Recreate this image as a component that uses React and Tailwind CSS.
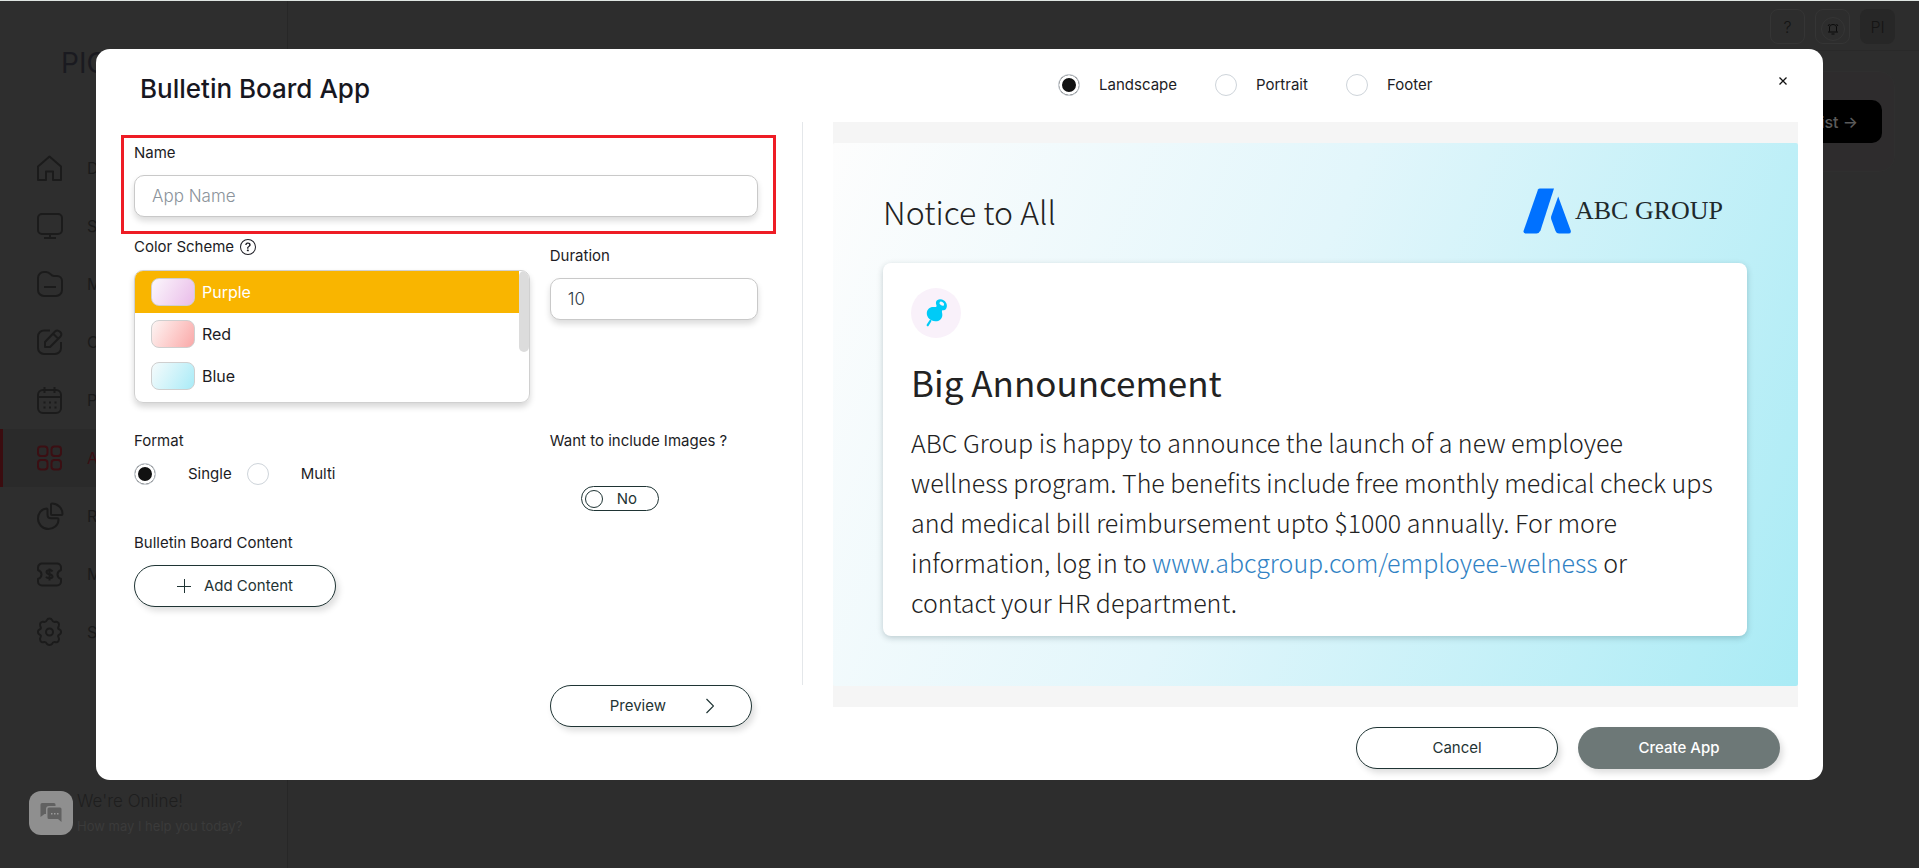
import { useState } from "react";
import { BsQuestionCircle } from "react-icons/bs";

const NAV = [
  { label: "Dashboard", icon: "home" },
  { label: "Screens", icon: "screen" },
  { label: "Media", icon: "folder" },
  { label: "Compose", icon: "edit" },
  { label: "Planner", icon: "calendar" },
  { label: "Apps", icon: "apps", active: true },
  { label: "Reports", icon: "pie" },
  { label: "Monetize", icon: "ticket" },
  { label: "Settings", icon: "gear" },
];

const SCHEMES = [
  { label: "Purple", swatch: "bg-linear-120 from-[#fbf7fc] to-[#e9bce9]" },
  { label: "Red", swatch: "bg-linear-120 from-[#fcf5f4] to-[#f9a8a8]" },
  { label: "Blue", swatch: "bg-linear-120 from-[#f5fbfc] to-[#a8ebf7]" },
];

const ICONS = {
  home: <path d="M1 11.500 12.500 1.500l11.500 10V25h-8v-8.500H9V25H1Z" />,
  screen: (
    <>
      <rect x="1" y="1" width="24" height="20" rx="4" />
      <path d="M13 21v4M7 25h12" />
    </>
  ),
  folder: (
    <>
      <path d="M1 7a6 6 0 0 1 6-6h2c5 0 4 4 8 4h3a5 5 0 0 1 5 5v9a6 6 0 0 1-6 6H7a6 6 0 0 1-6-6Z" />
      <path d="M7 16h12" />
    </>
  ),
  edit: (
    <>
      <path d="M13 1.500H7a6 6 0 0 0-6 6V19a6 6 0 0 0 6 6h11a6 6 0 0 0 6-6v-6" />
      <path d="M8 18v-5L18 2.500c3-3 8.500 2 5.500 5L13 18Z M16 4.500l5.500 5.500" />
    </>
  ),
  calendar: (
    <>
      <rect x="1" y="3" width="23" height="23" rx="5" />
      <path d="M1 10h23M7.500 0v6M17.500 0v6" />
      <path d="M6.500 15.500h2M12 15.500h2M17.500 15.500h2M6.500 20.500h2M12 20.500h2M17.500 20.500h2" />
    </>
  ),
  apps: (
    <>
      <rect x="1" y="1.500" width="9.500" height="9.500" rx="3" />
      <rect x="14.500" y="1.500" width="9.500" height="9.500" rx="3" />
      <rect x="1" y="15" width="9.500" height="9.500" rx="3" />
      <rect x="14.500" y="15" width="9.500" height="9.500" rx="3" />
    </>
  ),
  pie: (
    <>
      <path d="M9.500 5.500C4 6 1 10.500 1 15.500A10.500 10.500 0 0 0 11.500 26c5.500 0 10-4 10-9.500 0-.8-.5-1.200-1.200-1.200H14c-2.500 0-3.500-1-3.500-3.500V6.500c0-.7-.4-1-1-1Z" />
      <path d="M14 1.500c0-.6.4-1 1-1C20.500.5 25.500 5 25.500 11c0 .6-.4 1-1 1H15c-.6 0-1-.4-1-1Z" />
    </>
  ),
  ticket: (
    <>
      <path d="M5 2.500h15a4 4 0 0 1 4 4V9c-2.500 1-3.500 2.500-3.500 4.500S21.500 17 24 18v2.500a4 4 0 0 1-4 4H5a4 4 0 0 1-4-4V18c2.500-1 3.500-2.500 3.500-4.500S3.500 10 1 9V6.500a4 4 0 0 1 4-4Z" />
      <path d="M15.500 10.500c-1-2-6-1.800-6 .5 0 3 6 1.500 6 4.500 0 2.300-5 2.500-6.500.3M12.500 7.500v12" />
    </>
  ),
  gear: (
    <g transform="translate(0 -1.500)">
      <path d="M10 2.500c.8-2 4.200-2 5 0 .8 2 1.900 2.400 3.700 1.800 2-.6 4.300 2.200 3 4.400-1 1.900-.8 2.700 1 3.500 1.800.9 1.800 3.700 0 4.600-1.800.8-2 1.600-1 3.500 1.300 2.200-1 5-3 4.400-1.800-.6-2.900-.2-3.700 1.800-.8 1.200-4.200 1.200-5 0-.8-2-1.900-2.400-3.700-1.800-2 .6-4.300-2.200-3-4.400 1-1.900.8-2.700-1-3.500-1.800-.9-1.800-3.700 0-4.600 1.800-.8 2-1.600 1-3.500-1.300-2.200 1-5 3-4.400 1.800.6 2.900.2 3.700-1.800Z" />
      <circle cx="12.500" cy="14.500" r="3.500" />
    </g>
  ),
};

function NavIcon({ name }) {
  return (
    <svg className="h-[27px] w-[26px] shrink-0" viewBox="0 0 26 27" fill="none" stroke="currentColor" strokeWidth="2" strokeLinejoin="round" overflow="visible" aria-hidden="true">
      {ICONS[name]}
    </svg>
  );
}

function Radio({ name, label, checked, onChange, gap }) {
  return (
    <label className={"flex items-center text-[15px] leading-5 text-[#1c1c24] " + gap}>
      <input
        type="radio"
        name={name}
        checked={checked}
        onChange={onChange}
        className="size-[22px] appearance-none rounded-full border border-[#ced4da] bg-white checked:bg-[#111] checked:shadow-[inset_0_0_0_3px_#fff]"
      />
      {label}
    </label>
  );
}

const PILL =
  "flex h-[42px] w-[202px] items-center rounded-full border border-[#1f3434] text-[15px] leading-5 text-[#1f3434] bg-white shadow-[3px_4px_6px_rgba(0,0,0,0.13)]";
const FIELD =
  "h-[42px] w-full rounded-[10px] border border-[#c9c9c9] bg-white px-[17px] text-[17px] font-light shadow-[0_4px_6px_rgba(0,0,0,0.14)] outline-none";
const LABEL = "text-[15px] leading-5 text-[#1c1c24]";

function Backdrop() {
  return (
    <div className="flex min-h-screen border-t border-[#dfe5e2] bg-[#2d2d2d]">
      <aside className="flex w-72 flex-col border-r border-[#272727] bg-[#2e2e2e]">
        <div className="h-[138px] pt-[42px] pl-[61px] text-[28px] leading-10 text-[#1a1a20]">PICKCEL</div>
        <nav>
          {NAV.map((n) => (
            <a
              key={n.label}
              href="#"
              className={
                "flex h-[58px] items-center gap-6 border-l-3 pl-[34px] text-base " +
                (n.active ? "border-[#3b0c0f] bg-[#2a2a2a] text-[#3b0f13]" : "border-transparent text-[#1b1b1b]")
              }
            >
              <NavIcon name={n.icon} />
              {n.label}
            </a>
          ))}
        </nav>
        <div className="mt-auto flex items-center gap-1 pb-[30px] pl-[29px]">
          <span className="flex size-11 items-center justify-center rounded-xl bg-[#8f8f8f]">
            <svg className="size-[22px]" viewBox="0 0 22 22" fill="#616161" aria-hidden="true">
              <path d="M2 1h12a1.500 1.500 0 0 1 1.500 1.500V4H9a3 3 0 0 0-3 3v5H4.500L.5 15V2.500A1.500 1.500 0 0 1 2 1Z" />
              <path d="M9 5.500h11A1.500 1.500 0 0 1 21.500 7v13l-3.500-3H9a1.500 1.500 0 0 1-1.500-1.500V7A1.500 1.500 0 0 1 9 5.500Z" />
              <path d="M11 11h1.500v1.500H11ZM14 11h1.500v1.500H14ZM17 11h1.500v1.500H17Z" fill="#9a9a9a" />
            </svg>
          </span>
          <div>
            <p className="text-[17px] leading-[26px] font-light text-[#1e1e1e]">We're Online!</p>
            <p className="text-[13px] leading-6 text-[#3b3b3b]">How may I help you today?</p>
          </div>
        </div>
      </aside>
      <div className="flex-1">
        <header className="flex h-[50px] justify-end gap-[10px] border-b border-[#292929] pt-2 pr-6">
          <button className="size-[35px] rounded-lg border border-[#353535] text-base font-light text-[#141414]">?</button>
          <button aria-label="Notifications" className="flex size-[35px] items-center justify-center rounded-lg border border-[#353535] pt-1">
            <span className="flex size-6 items-center justify-center rounded-full border border-[#353535]">
              <svg className="size-3" viewBox="0 0 12 12" fill="none" stroke="#0b0b0b" aria-hidden="true">
                <path d="M2.500 8.500V4a3.500 2.500 0 0 1 7 0v4.500M1 9h10M4.500 11h3M1 3l1.500-2M11 3 9.500 1" />
              </svg>
            </span>
          </button>
          <span className="flex size-[35px] items-center justify-center rounded-lg bg-[#272727] text-base font-light text-[#151515]">PI</span>
        </header>
        <section className="mt-5 mr-6 ml-6 flex h-[101px] items-start justify-end rounded-2xl border border-[#2f2f2f] bg-[#2e2c2d] pt-7 pr-3">
          <button className="h-[43px] rounded-[10px] bg-black px-6 text-base font-medium text-[#5a5a5a]">Create Playlist →</button>
        </section>
      </div>
    </div>
  );
}

function BulletinPreview() {
  return (
    <div className="bg-[#f5f5f5] py-[21px]">
      <div className="flex aspect-video flex-col rounded-xs bg-linear-113 from-[#fdfdfd] via-[#e2f6fb] via-45% to-[#a9ebf5] pr-[51px] pb-[50px] pl-[50px] font-['Noto_Sans_CJK_SC',sans-serif] text-[#222]">
        <div className="flex h-[120px] items-center justify-between pt-4 pr-6">
          <h2 className="text-[32px] leading-10 font-light">Notice to All</h2>
          <div className="flex items-center gap-1">
            <svg className="h-[46px] w-12" viewBox="0 0 48 46" fill="#0071ff" aria-hidden="true">
              <path d="M15 1.500Q15.500.5 17 .5H31L17.500 42.500Q16 45.500 13.500 45.500H3Q-.2 45.500.7 42.500Z" />
              <path d="M35.200 8.500 47.700 42.500Q48.500 45.500 45.500 45.500H36Q33.500 45.500 32.500 43L28.500 32Q27.700 30 28.300 28Z" />
            </svg>
            <span className="font-['Liberation_Serif',serif] text-[26px] leading-[30px] text-[#1f2a2c]">ABC GROUP</span>
          </div>
        </div>
        <article className="flex-1 rounded-lg bg-white pt-[25px] pr-8 pl-7 shadow-[0_2px_6px_rgba(0,40,50,0.22)]">
          <div className="flex size-[50px] items-center justify-center rounded-full bg-[#f9f1fa]">
            <svg className="h-[30px] w-6" viewBox="0 0 24 30" aria-hidden="true">
              <path d="M3.700 27.200 6.300 23" stroke="#00cbf7" strokeWidth="2.200" strokeLinecap="round" />
              <path
                d="M12 4C13 .8 17 .6 20 2.500c3 2 4 6.500 1.500 9-1 .8-2.300.8-3.300.8-.8 1.500.4 3 .1 5.500-.5 3.500-3.300 5.700-7 5.500C6.500 23 2.800 19.500 2.800 15.500c0-4 3-6.700 6.700-6.500 1.200 0 2.300.3 3-.5C13 7.500 11.500 6 12 4Z"
                fill="#00cbf7"
              />
              <ellipse cx="17.800" cy="5.700" rx="2.600" ry="1.700" transform="rotate(35 17.800 5.700)" fill="#f3f4fc" />
            </svg>
          </div>
          <h3 className="mt-[22px] text-[35px] leading-[44px] font-normal">Big Announcement</h3>
          <p className="mt-[18px] text-[25px] leading-10 font-light">
            ABC Group is happy to announce the launch of a new employee wellness program. The benefits include free monthly
            medical check ups and medical bill reimbursement upto $1000 annually. For more information, log in to{" "}
            <a href="#" className="text-[#3182c4]">
              www.abcgroup.com/employee-welness
            </a>{" "}
            or contact your HR department.
          </p>
        </article>
      </div>
    </div>
  );
}

export default function App() {
  const [layout, setLayout] = useState("Landscape");
  const [format, setFormat] = useState("Single");
  const [scheme, setScheme] = useState("Purple");
  const [images, setImages] = useState(false);

  return (
    <div className="relative font-[Inter,sans-serif]">
      <Backdrop />
      <div className="absolute inset-x-0 top-0 flex justify-center pt-[49px]">
        <div role="dialog" aria-labelledby="dialog-title" className="w-[90%] rounded-[14px] bg-white pb-[11px]">
          <div className="flex h-[73px] items-start">
            <h1 id="dialog-title" className="w-[41%] pt-[22px] pl-11 text-[26px] leading-9 font-medium text-[#17171f]">
              Bulletin Board App
            </h1>
            <div className="flex flex-1 gap-[38px] pt-[25px] pl-[254px]">
              {["Landscape", "Portrait", "Footer"].map((l) => (
                <Radio key={l} name="layout" label={l} gap="gap-[19px]" checked={layout === l} onChange={() => setLayout(l)} />
              ))}
            </div>
            <button aria-label="Close" className="mt-6 mr-8 flex size-4 items-center justify-center text-[#111]">
              <svg className="size-2" viewBox="0 0 8 8" fill="none" stroke="currentColor" strokeWidth="1.300" aria-hidden="true">
                <path d="M.5.5l7 7M7.500.5l-7 7" />
              </svg>
            </button>
          </div>

          <div className="flex items-start">
            <form className="w-[41%] pt-[13px] pr-7 pl-[25px]" onSubmit={(e) => e.preventDefault()}>
              <div className="border-3 border-[#ee1c25] pt-[5px] pr-[15px] pb-[14px] pl-[10px]">
                <label htmlFor="app-name" className={"mb-3 block " + LABEL}>
                  Name
                </label>
                <input id="app-name" type="text" placeholder="App Name" className={FIELD + " block text-[#4a5560] placeholder:text-[#8b939b]"} />
              </div>

              <div className="pr-[18px] pl-[13px]">
                <div className="grid grid-cols-[19fr_10fr] gap-x-5">
                  <div className="pt-[3px]">
                    <div id="scheme-label" className={"mb-[13px] flex items-center gap-[6px] " + LABEL}>
                      Color Scheme
                      <BsQuestionCircle className="size-4" />
                    </div>
                    <div className="relative h-[133px] overflow-hidden rounded-[9px] border border-[#d0d0d0] shadow-[0_4px_6px_rgba(0,0,0,0.16)]">
                      <ul role="listbox" aria-labelledby="scheme-label" className="mr-[10px]">
                        {SCHEMES.map((s) => (
                          <li
                            key={s.label}
                            role="option"
                            aria-selected={scheme === s.label}
                            onClick={() => setScheme(s.label)}
                            className={
                              "flex h-[42px] items-center gap-[7px] pl-4 text-base " +
                              (scheme === s.label ? "bg-[#f9b500] text-white" : "text-[#1c1c24]")
                            }
                          >
                            <span className={"h-7 w-11 rounded-lg border border-[#cfcfcf] " + s.swatch} />
                            {s.label}
                          </li>
                        ))}
                      </ul>
                      <span className="absolute top-0 right-0 h-[81px] w-[10px] rounded-full bg-[#dcdcdc]" />
                    </div>
                  </div>
                  <div className="pt-3">
                    <label htmlFor="duration" className={"mb-3 block " + LABEL}>
                      Duration
                    </label>
                    <input id="duration" type="text" defaultValue="10" className={FIELD + " text-[#2f3a45]"} />
                  </div>
                </div>

                <div className="mt-7 grid grid-cols-[19fr_10fr] gap-x-5">
                  <fieldset>
                    <legend className={"mb-3 " + LABEL}>Format</legend>
                    <div className="flex gap-[15px]">
                      {["Single", "Multi"].map((f) => (
                        <Radio key={f} name="format" label={f} gap="gap-8" checked={format === f} onChange={() => setFormat(f)} />
                      ))}
                    </div>
                  </fieldset>
                  <div>
                    <div id="images-label" className={"whitespace-nowrap " + LABEL}>
                      Want to include Images ?
                    </div>
                    <button
                      type="button"
                      role="switch"
                      aria-checked={images}
                      aria-labelledby="images-label"
                      onClick={() => setImages(!images)}
                      className="mt-[35px] ml-[31px] flex h-[25px] w-[78px] items-center gap-[14px] rounded-full border border-[#1f3434] pl-[3px] text-[15px] leading-5 text-[#1f3434]"
                    >
                      <span className="size-[18px] rounded-full border border-[#1f3434]" />
                      {images ? "Yes" : "No"}
                    </button>
                  </div>
                </div>

                <p className={"mt-[22px] mb-3 " + LABEL}>Bulletin Board Content</p>
                <button type="button" className={PILL + " justify-center gap-[13px]"}>
                  <svg className="size-[14px]" viewBox="0 0 14 14" fill="none" stroke="currentColor" aria-hidden="true">
                    <path d="M7.500 0v14M0 7.500h14" />
                  </svg>
                  Add Content
                </button>

                <div className="mt-[78px] grid grid-cols-[19fr_10fr] gap-x-5">
                  <button type="button" className={PILL + " col-start-2 justify-between pr-[37px] pl-[59px]"}>
                    Preview
                    <svg className="h-4 w-2" viewBox="0 0 8 16" fill="none" stroke="currentColor" strokeWidth="1.200" aria-hidden="true">
                      <path d="m.5 1 7 7-7 7" />
                    </svg>
                  </button>
                </div>
              </div>
            </form>

            <div className="-ml-[2px] h-[563px] w-px bg-[#e4e7ea]" />

            <div className="flex-1 pr-[25px] pl-[30px]">
              <BulletinPreview />
              <div className="mt-5 flex justify-end gap-5 pr-[18px]">
                <button type="button" className={PILL + " justify-center"}>
                  Cancel
                </button>
                <button
                  type="button"
                  className="flex h-[42px] w-[202px] items-center justify-center rounded-full bg-[#6d7877] text-[15px] leading-5 font-medium text-white shadow-[3px_4px_6px_rgba(0,0,0,0.13)]"
                >
                  Create App
                </button>
              </div>
            </div>
          </div>
        </div>
      </div>
    </div>
  );
}
